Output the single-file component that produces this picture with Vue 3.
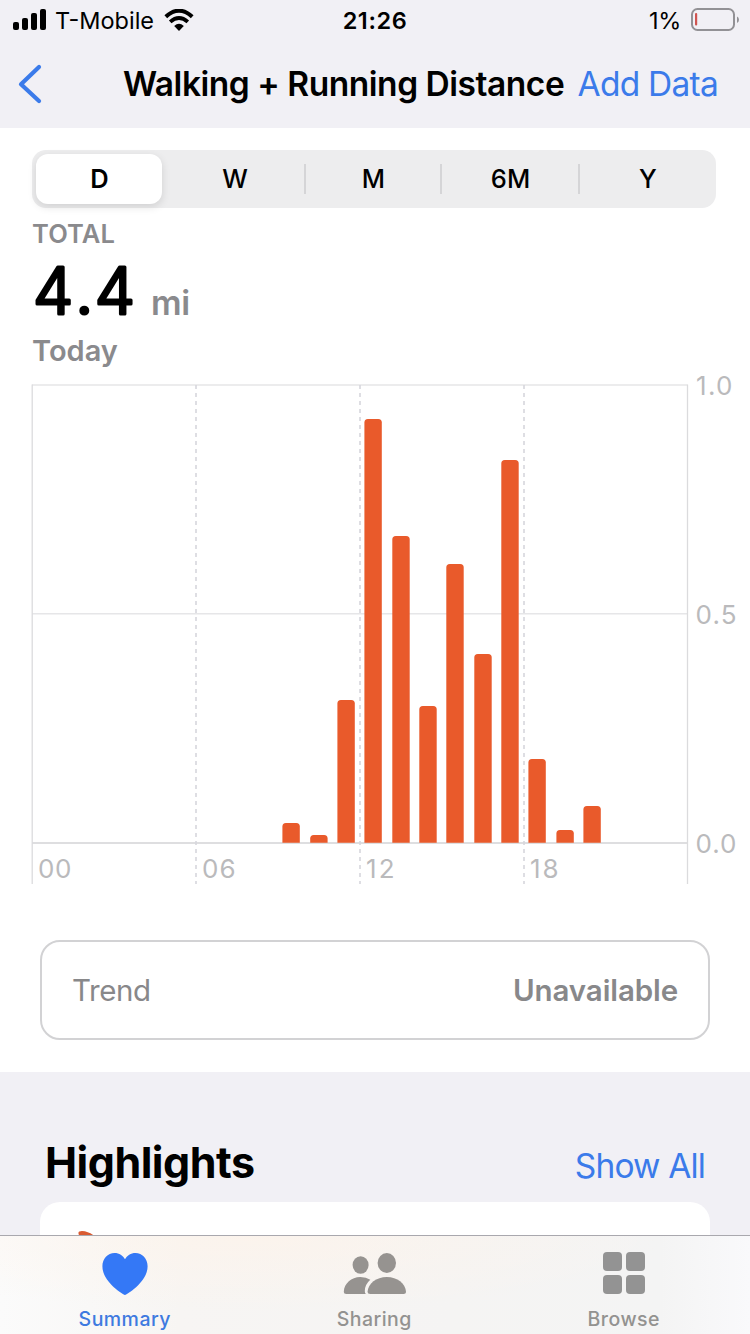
<script setup>
const ranges = ['D', 'W', 'M', '6M', 'Y']

const bars = [
  { x: 282.4, top: 823 },
  { x: 310.2, top: 835 },
  { x: 337.4, top: 700 },
  { x: 364.4, top: 419 },
  { x: 392.3, top: 536 },
  { x: 419.3, top: 706 },
  { x: 446.3, top: 564 },
  { x: 474.3, top: 654 },
  { x: 501.3, top: 460 },
  { x: 528.4, top: 759 },
  { x: 556.4, top: 830 },
  { x: 583.4, top: 806 }
]

const barPath = ({ x, top }) => {
  const r = 3.5
  return `M${x} 842.7V${top + r}q0 ${-r} ${r} ${-r}h${17.4 - 2 * r}q${r} 0 ${r} ${r}V842.7z`
}

const hours = [
  { label: '00', x: 38 },
  { label: '06', x: 202 },
  { label: '12', x: 366 },
  { label: '18', x: 530 }
]
</script>

<template>
  <div class="screen">
    <header class="top">
      <div class="status">
        <div class="carrier">
          <svg class="signal" width="34" height="22" viewBox="0 0 34 22">
            <rect x="0" y="13" width="6" height="8" rx="2" />
            <rect x="9" y="9" width="6" height="12" rx="2" />
            <rect x="18" y="4" width="6" height="17" rx="2" />
            <rect x="27" y="0" width="6" height="21" rx="2" />
          </svg>
          <span class="carrier-name">T-Mobile</span>
          <svg class="wifi" width="30" height="22" viewBox="0 0 30 22">
            <path d="M1.800 7.800Q15-4.400 28.200 7.800" fill="none" stroke="#000" stroke-width="4" />
            <path d="M6.200 12.800Q15 5 23.800 12.800" fill="none" stroke="#000" stroke-width="3.800" />
            <path d="M10.200 17Q15 12.400 19.800 17L15 22z" />
          </svg>
        </div>
        <span class="clock">21:26</span>
        <div class="power">
          <span class="percent">1%</span>
          <svg width="49" height="24" viewBox="0 0 49 24">
            <rect x="1" y="1" width="42" height="21" rx="5.500" fill="none" stroke="#929195" stroke-width="2" />
            <rect x="4" y="5" width="2.200" height="12.500" rx="1" fill="#cf5450" />
            <path d="M46 8.500q2 .8 2 3.200t-2 3.200z" fill="#929195" />
          </svg>
        </div>
      </div>
      <nav class="nav">
        <svg class="back" width="24" height="40" viewBox="0 0 24 40">
          <path d="M21 3L3 20.300L21 37" fill="none" stroke="#3b7bea" stroke-width="4.200" stroke-linecap="round" stroke-linejoin="round" />
        </svg>
        <h1 class="title">Walking + Running Distance</h1>
        <a class="add">Add Data</a>
      </nav>
    </header>

    <main class="panel">
      <div class="segments">
        <div v-for="r in ranges" :key="r" class="segment" :class="{ active: r === 'D', divided: r === 'M' || r === '6M' || r === 'Y' }">
          <span>{{ r }}</span>
        </div>
      </div>

      <section class="summary">
        <div class="total">TOTAL</div>
        <div class="reading">
          <svg class="value" width="108" height="84" viewBox="0 -12 108 84">
            <text x="1 43.300 62.800" y="54" class="value-text">4.4</text>
          </svg>
          <span class="unit">mi</span>
        </div>
        <div class="today">Today</div>
      </section>

      <svg class="chart" width="750" height="528" viewBox="0 362 750 528">
        <g fill="none" stroke="#e6e6e8" stroke-width="1.600">
          <path d="M32 385H687.500M32 613.800H687.500" />
          <path d="M32 843H687.500" stroke="#dedee0" stroke-width="2" />
          <path d="M32.200 384.500V884M687.500 384.500V884" stroke="#dbdbdd" stroke-width="1.300" />
          <path d="M196 385V884M360 385V884M524 385V884" stroke="#d6d6dc" stroke-width="1.600" stroke-dasharray="4 4" />
        </g>
        <path v-for="b in bars" :key="b.x" :d="barPath(b)" fill="#e95a2b" />
        <g class="axis">
          <text x="696" y="395" textLength="36.500">1.0</text>
          <text x="695.500" y="624" textLength="41">0.5</text>
          <text x="695.500" y="853" textLength="41">0.0</text>
          <text v-for="h in hours" :key="h.label" :x="h.x" y="878" :textLength="h.label[0] === '1' ? 28.5 : 33.5">{{ h.label }}</text>
        </g>
      </svg>

      <div class="trend">
        <span class="trend-name">Trend</span>
        <span class="trend-value">Unavailable</span>
      </div>
    </main>

    <section class="highlights">
      <div class="heading">
        <h2>Highlights</h2>
        <a class="show">Show All</a>
      </div>
      <div class="card">
        <svg width="20" height="8" viewBox="0 0 20 8">
          <path d="M.5 2.500Q0 0 4 0Q11 .3 17 5.500L8 8Q6 4 1 4.500z" fill="#d95b32" />
        </svg>
      </div>
    </section>

    <footer class="tabs">
      <div class="tab selected">
        <svg width="46" height="44" viewBox="0 0 46 44">
          <path d="M23 43C20 42 .4 29.500.4 14.300C.4 6.500 5.800 1 12.500 1C17.300 1 21 3.500 23 7.300C25 3.500 28.700 1 33.500 1C40.200 1 45.600 6.500 45.600 14.300C45.600 29.500 26 42 23 43z" fill="#3478f6" />
        </svg>
        <span class="label-summary">Summary</span>
      </div>
      <div class="tab">
        <svg width="64" height="44" viewBox="-.8 0 64 44">
          <g fill="#969390">
            <ellipse cx="17.800" cy="13" rx="8" ry="8.800" />
            <ellipse cx="44" cy="11" rx="9.200" ry="10" />
            <path d="M3.500 42Q1 42 1 39.500C1.500 31.500 8.500 25 17.500 25Q23.500 25 27.500 27.700Q22 32.500 22 39Q22 40.800 23 42z" />
            <path d="M27.500 42Q24.800 42 24.800 39.500C25.300 31.800 33.500 25 44 25S62.700 31.800 63.200 39.500Q63.200 42 60.700 42z" />
          </g>
        </svg>
        <span class="label-sharing">Sharing</span>
      </div>
      <div class="tab">
        <svg width="44" height="44" viewBox="0 0 44 44">
          <g fill="#939393">
            <rect x="1" y="0" width="19" height="19" rx="4" />
            <rect x="24" y="0" width="19" height="19" rx="4" />
            <rect x="1" y="23" width="19" height="19" rx="4" />
            <rect x="24" y="23" width="19" height="19" rx="4" />
          </g>
        </svg>
        <span class="label-browse">Browse</span>
      </div>
    </footer>
  </div>
</template>

<style>
body {
  background: #f1f0f5;
}
</style>

<style scoped>
.screen {
  width: 750px;
  height: 1334px;
  display: flex;
  flex-direction: column;
  overflow: hidden;
  box-sizing: border-box;
  background: #f1f0f5;
  font-family: Inter, "Liberation Sans", sans-serif;
  color: #000;
  white-space: nowrap;
}

svg {
  display: block;
  flex: none;
}

.top {
  height: 128px;
  flex: none;
}

.status {
  height: 40px;
  display: grid;
  grid-template-columns: 1fr auto 1fr;
  align-items: center;
  padding: 0 10px 0 13px;
  font-size: 23.500px;
  line-height: 38px;
}

.status span {
  padding-top: 2px;
}

.carrier,
.power {
  display: flex;
  align-items: center;
}

.power {
  justify-content: flex-end;
  gap: 10px;
}

.percent {
  letter-spacing: -0.3px;
}

.carrier-name {
  margin-left: 8px;
}

.wifi {
  margin-left: 10px;
}

.clock {
  font-weight: 600;
  letter-spacing: 0.6px;
  margin-left: -3px;
}

.nav {
  height: 88px;
  display: flex;
  align-items: center;
  padding: 0 32px 0 18px;
  box-sizing: border-box;
}

.title {
  margin: 0 0 0 81px;
  font-size: 33.500px;
  line-height: 88px;
  font-weight: 600;
  letter-spacing: -0.470px;
}

.add {
  margin-left: auto;
  color: #3b7bea;
  font-size: 33.500px;
  letter-spacing: -0.750px;
}

.panel {
  height: 944px;
  flex: none;
  background: #fff;
  padding-top: 22px;
  box-sizing: border-box;
}

.segments {
  width: 684px;
  height: 58px;
  margin-left: 32px;
  padding: 4px;
  box-sizing: border-box;
  display: grid;
  grid-template-columns: 126px 142px 136px 138px 134px;
  background: #ededee;
  border-radius: 14px;
}

.segment {
  display: flex;
  align-items: center;
  justify-content: center;
  font-size: 25.500px;
  font-weight: 500;
  line-height: 50px;
  height: 50px;
}

.segment span {
  padding-left: 1px;
  height: 51px;
}

.segment:nth-child(2) span {
  padding-left: 4px;
}

.segment.active {
  background: #fff;
  border-radius: 12px;
  font-weight: 600;
  box-shadow: 0 3px 8px rgba(0, 0, 0, 0.12);
}

.segment.divided::before {
  content: "";
  width: 2px;
  height: 30px;
  background: #d5d5d7;
}

.segment.divided span {
  flex: 1;
  text-align: center;
}

.segment:last-child span {
  padding-left: 4px;
}

.summary {
  height: 154px;
  padding-left: 32px;
  color: #8a8a8d;
}

.total {
  height: 52px;
  line-height: 52px;
  font-size: 25.500px;
  font-weight: 600;
  letter-spacing: 0.1px;
}

.reading {
  height: 60px;
  display: flex;
}

.value {
  margin-top: -12px;
}

.value-text {
  font-size: 64px;
  font-weight: 300;
  fill: #000;
  stroke: #000;
  stroke-width: 3.200px;
  stroke-linejoin: round;
}

.unit {
  margin-left: 11px;
  line-height: 86px;
  font-size: 34px;
  font-weight: 600;
  letter-spacing: -0.3px;
}

.today {
  height: 42px;
  line-height: 62px;
  font-size: 29px;
  font-weight: 600;
}

.axis {
  font-size: 26px;
  font-weight: 400;
  fill: #bababc;
}

.trend {
  margin: 50px 40px 0;
  height: 100px;
  padding: 0 30px;
  box-sizing: border-box;
  border: 2px solid #d2d2d4;
  border-radius: 20px;
  display: flex;
  justify-content: space-between;
  align-items: center;
  color: #88888a;
  font-size: 29.500px;
}

.trend-name {
  letter-spacing: -0.4px;
}

.trend-value {
  font-weight: 600;
  letter-spacing: -0.100px;
}

.highlights {
  height: 163px;
  flex: none;
  overflow: hidden;
}

.heading {
  height: 130px;
  padding: 0 45px;
  display: flex;
  justify-content: space-between;
}

.heading h2 {
  margin: 0;
  font-size: 43px;
  font-weight: 700;
  line-height: 181px;
  letter-spacing: -0.500px;
}

.show {
  color: #3b7bea;
  font-size: 33.500px;
  line-height: 188px;
  letter-spacing: -0.850px;
}

.card {
  margin: 0 40px;
  height: 60px;
  padding: 29px 38px 0;
  box-sizing: border-box;
  border-radius: 20px 20px 0 0;
  background: #fff;
}

.tabs {
  height: 99px;
  flex: none;
  box-sizing: border-box;
  border-top: 1px solid #a9a8ae;
  display: grid;
  grid-template-columns: repeat(3, 249.500px);
  background:
    radial-gradient(ellipse 420px 75px at 250px 0, rgba(255, 243, 232, 0.6), rgba(255, 243, 232, 0)),
    linear-gradient(90deg, #fbfbfb, #f7f5f3 24%, #f5f4f3 60%, #f4f4f4 88%, #f9f9fb);
}

.tab {
  display: flex;
  flex-direction: column;
  align-items: center;
  padding-top: 16px;
  color: #939290;
  font-size: 19.500px;
  font-weight: 500;
}

.tab span {
  line-height: 24px;
  margin-top: 11px;
  letter-spacing: 0.450px;
}

.tab.selected {
  color: #3e7ae0;
}
</style>
